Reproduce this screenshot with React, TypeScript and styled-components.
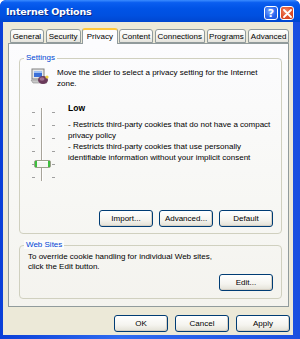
import React from "react";
import styled, { createGlobalStyle } from "styled-components";

const Global = createGlobalStyle`
  html, body { margin: 0; padding: 0; background: #ffffff; }
  body { font-family: "Liberation Sans", Arial, sans-serif; font-size: 8px; color: #000; }
  * { box-sizing: border-box; }
`;

const Window = styled.div`
  width: 300px;
  height: 339px;
  display: flex;
  flex-direction: column;
  background: linear-gradient(90deg, #0a3fd8 0%, #2f6bf0 40%, #1a4fe0 100%);
  border-radius: 6px 6px 0 0;
  padding: 0 7px 4px 3px;
  overflow: hidden;
`;

const TitleBar = styled.div`
  height: 22px;
  margin: 0 -7px 0 -3px;
  padding: 0 6px 0 6px;
  display: flex;
  align-items: center;
  background: linear-gradient(180deg, #3b8cff 0%, #0a5ef0 12%, #0053e6 40%, #0050e0 70%, #0046d0 100%);
  border-radius: 6px 6px 0 0;
`;

const Title = styled.div`
  flex: 1;
  color: #fff;
  font-family: "DejaVu Sans", "Liberation Sans", sans-serif;
  font-weight: bold;
  font-size: 9.5px;
  letter-spacing: -0.2px;
  text-shadow: 1px 1px 0 #0a2a8a;
  padding-top: 1px;
`;

const CapButton = styled.div<{ $red?: boolean }>`
  width: 14px;
  height: 14px;
  margin-left: 2px;
  margin-top: 4px;
  border: 1px solid #fff;
  border-radius: 3px;
  display: flex;
  align-items: center;
  justify-content: center;
  color: #fff;
  font-weight: bold;
  font-size: 11px;
  font-family: "DejaVu Sans", sans-serif;
  background: ${(p) =>
    p.$red
      ? "radial-gradient(circle at 40% 35%, #f08a6a 0%, #e0502a 55%, #c8361a 100%)"
      : "radial-gradient(circle at 40% 35%, #7aa8ff 0%, #2a68f0 55%, #1a50d8 100%)"};
`;

const Body = styled.div`
  flex: 1;
  background: #ece9d8;
  display: flex;
  flex-direction: column;
  padding: 5px 4px 0 5px;
`;

const TabRow = styled.div`
  display: flex;
  align-items: flex-end;
  padding-left: 2px;
  gap: 2px;
  height: 16px;
  position: relative;
  z-index: 1;
`;

const Tab = styled.div<{ $w: number; $active?: boolean }>`
  width: ${(p) => p.$w}px;
  height: ${(p) => (p.$active ? 16 : 14)}px;
  margin-bottom: ${(p) => (p.$active ? -1 : 0)}px;
  ${(p) => (p.$active ? "margin-left: -1px; margin-right: -1px;" : "")}
  border: 1px solid #919b9c;
  border-bottom: ${(p) => (p.$active ? "none" : "1px solid #919b9c")};
  border-top: ${(p) => (p.$active ? "2px solid #ffc83c" : "1px solid #919b9c")};
  border-radius: 3px 3px 0 0;
  background: ${(p) =>
    p.$active ? "#fcfcfe" : "linear-gradient(180deg, #ffffff 0%, #f3f3ef 60%, #e4e3dc 100%)"};
  display: flex;
  align-items: center;
  justify-content: center;
  font-size: 8px;
  color: #000;
  white-space: nowrap;
  padding-bottom: ${(p) => (p.$active ? 2 : 0)}px;
`;

const Panel = styled.div`
  height: 264px;
  border: 1px solid #919b9c;
  background: linear-gradient(180deg, #fcfcfe 0%, #f7f7f4 60%, #f4f3ee 100%);
  padding: 14px 6px 0 10px;
  display: flex;
  flex-direction: column;
`;

const Group = styled.div<{ $h: number; $pt: number }>`
  position: relative;
  flex: none;
  height: ${(p) => p.$h}px;
  border: 1px solid #d0d0bf;
  border-radius: 4px;
  padding: ${(p) => p.$pt}px 8px 0 10px;
  display: flex;
  flex-direction: column;
`;

const Legend = styled.div`
  position: absolute;
  top: -6px;
  left: 4px;
  color: #0046d5;
  font-size: 8px;
  padding: 0 2px;
  line-height: 9px;
  background: #fcfcfb;
`;

const IntroRow = styled.div`
  display: flex;
  gap: 7px;
`;

const Intro = styled.div`
  line-height: 11px;
  padding-top: 1px;
`;

const SliderRow = styled.div`
  display: flex;
  margin-top: 14px;
  gap: 12px;
`;

const SliderBox = styled.div`
  margin-top: 5px;
  flex: none;
`;

const LevelText = styled.div`
  display: flex;
  flex-direction: column;
  line-height: 11px;
`;

const Level = styled.div`
  font-weight: bold;
  font-size: 8.5px;
  margin-bottom: 5px;
`;

const Desc = styled.div`
  line-height: 11px;
`;

const ButtonRow = styled.div<{ $gap: number }>`
  display: flex;
  justify-content: flex-end;
  gap: ${(p) => p.$gap}px;
`;

const Button = styled.div<{ $w?: number }>`
  width: ${(p) => p.$w ?? 54}px;
  height: 17px;
  border: 1px solid #003c74;
  border-radius: 3px;
  background: linear-gradient(180deg, #ffffff 0%, #f5f4ef 60%, #e3e1d6 100%);
  box-shadow: inset -1px -1px 0 #d6d0c5;
  display: flex;
  align-items: center;
  justify-content: center;
  font-size: 8px;
  color: #000;
`;

const GroupBottom = styled.div<{ $pb: number }>`
  margin-top: auto;
  padding-bottom: ${(p) => p.$pb}px;
`;

const WebText = styled.div`
  line-height: 10px;
  margin-left: -2px;
`;

const Footer = styled.div`
  display: flex;
  justify-content: flex-end;
  gap: 7px;
  margin-top: 8px;
  margin-right: -1px;
`;

const Spacer = styled.div<{ $h: number }>`
  height: ${(p) => p.$h}px;
  flex: none;
`;

function PrivacyIcon() {
  return (
    <svg width="20" height="20" viewBox="0 0 20 20">
      <rect x="2" y="3" width="12" height="10" fill="#e8e8e8" stroke="#808080" strokeWidth="1" />
      <rect x="4" y="5" width="8" height="6" fill="#3b6fd8" />
      <rect x="4" y="5" width="8" height="2" fill="#9ec0f5" />
      <path d="M1 14 L15 14 L17 17 L3 17 Z" fill="#c9c9c9" stroke="#8a8a8a" strokeWidth="0.6" />
      <ellipse cx="13" cy="14" rx="5" ry="4" fill="#6a3a5a" />
      <ellipse cx="12" cy="13" rx="2.5" ry="1.8" fill="#a07090" />
      <circle cx="17" cy="11" r="1.6" fill="#f0d040" />
    </svg>
  );
}

function Slider() {
  const ticks = [4, 17, 30, 43, 56, 69];
  return (
    <svg width="26" height="74" viewBox="0 0 26 74">
      {ticks.map((y) => (
        <g key={y}>
          <line x1="2" y1={y + 0.5} x2="5" y2={y + 0.5} stroke="#a0a0a0" strokeWidth="1" />
          <line x1="22" y1={y + 0.5} x2="25" y2={y + 0.5} stroke="#a0a0a0" strokeWidth="1" />
        </g>
      ))}
      <rect x="11" y="0" width="1" height="73" fill="#a8a49a" />
      <rect x="12" y="0" width="1" height="73" fill="#ffffff" />
      <rect x="4.5" y="52.5" width="16" height="7" rx="1.5" fill="#f6f6f2" stroke="#9aa08a" strokeWidth="1" />
      <rect x="5" y="53" width="2" height="6" fill="#3cbf3c" />
      <rect x="18" y="53" width="2" height="6" fill="#3cbf3c" />
      <rect x="7" y="53" width="11" height="1" fill="#ffffff" />
    </svg>
  );
}

const tabs: { label: string; w: number; active?: boolean }[] = [
  { label: "General", w: 34 },
  { label: "Security", w: 35 },
  { label: "Privacy", w: 37, active: true },
  { label: "Content", w: 34 },
  { label: "Connections", w: 50 },
  { label: "Programs", w: 40 },
  { label: "Advanced", w: 41 },
];

export default function App() {
  return (
    <>
      <Global />
      <Window>
        <TitleBar>
          <Title>Internet Options</Title>
          <CapButton>?</CapButton>
          <CapButton $red>
            <svg width="9" height="9" viewBox="0 0 9 9">
              <path d="M1 1 L8 8 M8 1 L1 8" stroke="#fff" strokeWidth="1.8" strokeLinecap="round" />
            </svg>
          </CapButton>
        </TitleBar>
        <Body>
          <TabRow>
            {tabs.map((t) => (
              <Tab key={t.label} $w={t.w} $active={t.active}>
                {t.label}
              </Tab>
            ))}
          </TabRow>
          <Panel>
            <Group $h={176} $pt={7}>
              <Legend>Settings</Legend>
              <IntroRow>
                <PrivacyIcon />
                <Intro>
                  Move the slider to select a privacy setting for the Internet
                  <br />
                  zone.
                </Intro>
              </IntroRow>
              <SliderRow>
                <SliderBox>
                  <Slider />
                </SliderBox>
                <LevelText>
                  <Level>Low</Level>
                  <Desc>
                    - Restricts third-party cookies that do not have a compact
                    <br />
                    privacy policy
                    <br />
                    - Restricts third-party cookies that use personally
                    <br />
                    identifiable information without your implicit consent
                  </Desc>
                </LevelText>
              </SliderRow>
              <GroupBottom $pb={6}>
                <ButtonRow $gap={6}>
                  <Button>Import...</Button>
                  <Button>Advanced...</Button>
                  <Button>Default</Button>
                </ButtonRow>
              </GroupBottom>
            </Group>
            <Spacer $h={11} />
            <Group $h={54} $pt={6}>
              <Legend>Web Sites</Legend>
              <WebText>
                To override cookie handling for individual Web sites,
                <br />
                click the Edit button.
              </WebText>
              <GroupBottom $pb={7}>
                <ButtonRow $gap={6}>
                  <Button>Edit...</Button>
                </ButtonRow>
              </GroupBottom>
            </Group>
          </Panel>
          <Footer>
            <Button $w={54}>OK</Button>
            <Button $w={54}>Cancel</Button>
            <Button $w={54}>Apply</Button>
          </Footer>
        </Body>
      </Window>
    </>
  );
}
